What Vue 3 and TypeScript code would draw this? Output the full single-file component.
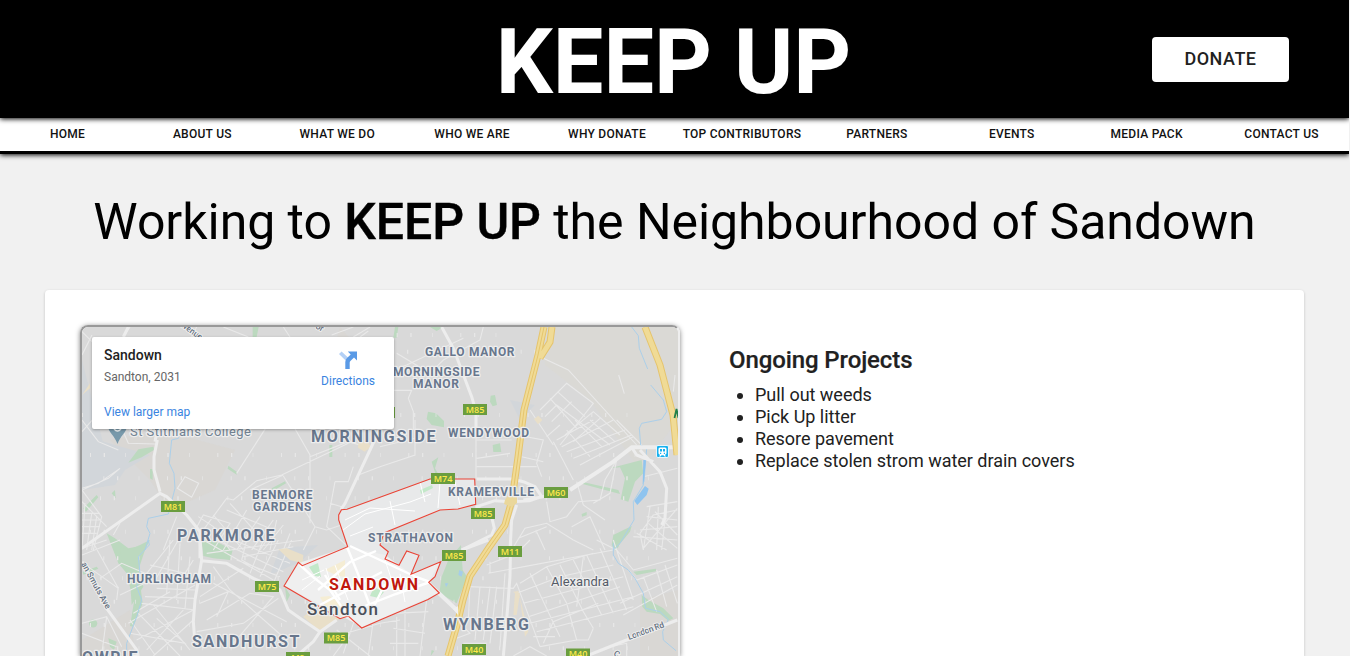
<script setup lang="ts">
interface MapLabel {
  text: string
  x: number
  y: number
  width: number
  size: number
  kind: string
  rotate?: number
}
interface Shield {
  text: string
  x: number
  y: number
}

const navItems: string[] = [
  'HOME', 'ABOUT US', 'WHAT WE DO', 'WHO WE ARE', 'WHY DONATE',
  'TOP CONTRIBUTORS', 'PARTNERS', 'EVENTS', 'MEDIA PACK', 'CONTACT US',
]

const projects: string[] = [
  'Pull out weeds',
  'Pick Up litter',
  'Resore pavement',
  'Replace stolen strom water drain covers',
]

const labels: MapLabel[] = [
  { text: 'GALLO MANOR', x: 425, y: 356.3, width: 89.5, size: 12, kind: 'area' },
  { text: 'MORNINGSIDE', x: 393, y: 376.3, width: 86.5, size: 12, kind: 'area' },
  { text: 'MANOR', x: 413, y: 388.3, width: 46, size: 12, kind: 'area' },
  { text: 'WENDYWOOD', x: 448, y: 437.3, width: 81, size: 12, kind: 'area' },
  { text: 'MORNINGSIDE', x: 311, y: 441.5, width: 124.5, size: 16, kind: 'area' },
  { text: 'St Stithians College', x: 130, y: 436, width: 121, size: 13, kind: 'place' },
  { text: 'BENMORE', x: 252, y: 499.3, width: 60.5, size: 12, kind: 'area' },
  { text: 'GARDENS', x: 253, y: 511.3, width: 58.5, size: 12, kind: 'area' },
  { text: 'PARKMORE', x: 177, y: 540.5, width: 97.5, size: 16, kind: 'area' },
  { text: 'KRAMERVILLE', x: 448, y: 496.3, width: 86, size: 12, kind: 'area' },
  { text: 'STRATHAVON', x: 368, y: 542.3, width: 85, size: 12, kind: 'area' },
  { text: 'HURLINGHAM', x: 127, y: 583.3, width: 84, size: 12, kind: 'area' },
  { text: 'SANDHURST', x: 192, y: 646.5, width: 107.5, size: 16, kind: 'area' },
  { text: 'WYNBERG', x: 443, y: 629.5, width: 86, size: 16, kind: 'area' },
  { text: 'OWRIE', x: 82, y: 662.5, width: 55.5, size: 16, kind: 'area' },
  { text: 'SANDOWN', x: 329, y: 589.5, width: 89, size: 16, kind: 'active' },
  { text: 'Sandton', x: 307, y: 615, width: 71, size: 17, kind: 'city' },
  { text: 'Alexandra', x: 551, y: 585.5, width: 58, size: 13, kind: 'town' },
  { text: 'London Rd', x: 629, y: 640, width: 38, size: 8.5, kind: 'street', rotate: -20 },
  { text: 'an Smuts Ave', x: 81, y: 564, width: 52, size: 8.5, kind: 'street', rotate: 61 },
  { text: 'avenue', x: 179, y: 325, width: 26, size: 8.5, kind: 'street', rotate: 36 },
]

const shields: Shield[] = [
  { text: 'M85', x: 463, y: 404 },
  { text: 'M81', x: 161, y: 501 },
  { text: 'M74', x: 431, y: 473 },
  { text: 'M60', x: 544, y: 487 },
  { text: 'M85', x: 471, y: 508 },
  { text: 'M11', x: 498, y: 546 },
  { text: 'M85', x: 442, y: 550 },
  { text: 'M75', x: 255, y: 581 },
  { text: 'M85', x: 324, y: 632.5 },
  { text: 'M40', x: 462, y: 644 },
  { text: 'M40', x: 566, y: 648.5 },
  { text: 'M9', x: 286, y: 652 },
  { text: 'M9', x: 371, y: 407 },
]

const boundary =
  'M380 497.3L430 479H474.7L475.7 504.3L458 509L440 510L384 533L380 545L388.3 551.7L385 559L399 565.3' +
  'L406.7 551L419 555.3L411 574.3L440.7 561.7L435 576.7L428.7 582.3L439.3 593L428 599.5L380 620' +
  'L361.7 628L348.3 616L340 618.7L284 586L298.3 562.3L302.3 565.7L347.7 546.7L338.7 520V515L341.5 509.7L347 509.2Z'
</script>

<template>
  <div class="page">
    <header class="masthead">
      <div class="brand">KEEP UP</div>
      <button class="donate" type="button">DONATE</button>
    </header>
    <nav class="nav">
      <a v-for="item in navItems" :key="item" class="nav-item">{{ item }}</a>
    </nav>
    <h1 class="headline">Working to <b>KEEP UP</b> the Neighbourhood of Sandown</h1>

    <main class="card">
      <div class="map">
        <svg class="map-art" viewBox="82 327 596 329" width="596" height="329">
          <rect x="82" y="327" width="596" height="329" fill="#d9d9d9" />
          <path fill="#dad9d5" d="M542 327H678V420L640 470L590 400L545 365Z" />
          <path fill="#d8d6d2" d="M110 440L160 430L235 450L215 490L170 510L150 480ZM82 640L130 610L135 656H82ZM340 327L360 350L345 385L320 400ZM640 600L678 590V656H640Z" opacity=".7" />
          <path fill="#d2d6da" d="M82 435L115 445L150 455L125 470L115 485L82 490ZM270 575L300 562L318 545L280 548ZM82 360L105 450L82 445ZM510 400L535 405L520 420ZM385 505L420 500L400 515Z" />

          <g transform="translate(70 315) scale(.33333)">
            <!-- parks -->
            <g class="park">
              <path d="M548 36H566L560 66H548ZM975 36H985L980 68H970Z" />
              <path transform="translate(930 0)" d="M150 36L190 36L170 48ZM332 242L345 240L351 270L338 274L330 260ZM144 290L168 295L192 318V337L155 330L140 312Z" />
              <path transform="translate(0 315)" d="M175 128L205 88L250 80L252 90L215 112ZM240 147H248V180L240 175ZM475 137L500 155V164L473 146ZM40 265L80 225L85 232L48 275ZM125 220L135 210L137 235ZM605 205L645 184L648 190L610 212ZM778 75H787V111H778ZM110 340L135 355L175 385L200 380L225 390L200 430L220 500L185 555L182 510L170 460L145 430Z" />
              <path transform="translate(930 315)" d="M338 75L360 70L364 96H340ZM155 125L175 112L165 145L185 180L195 265L185 265L175 190ZM118 212L158 194L160 203L122 222ZM605 185L715 210L720 222L608 192ZM690 145L785 120L790 160L765 185L745 245L722 238L735 175L720 142ZM605 282L620 276V286L606 290ZM700 345L755 318L750 335L705 390L695 375Z" />
              <path transform="translate(0 675)" d="M150 20L175 30L210 15L240 0L225 30L205 90L218 190L190 260L180 258L193 180L183 110L155 65ZM395 0L430 0L488 30L480 60L430 55L400 48ZM38 95L80 80L85 86L40 104ZM57 250C57 235 80 235 82 250C82 267 57 267 57 250ZM645 140L660 165L650 185ZM115 295L140 305L132 330L120 320Z" />
              <path transform="translate(930 675)" d="M205 60L243 15L248 90L262 112L230 190L178 160L185 110ZM700 15L720 0L716 20L705 32ZM760 95L828 86V94L770 105ZM785 165L805 180L850 205L880 235L865 242L840 222L800 215L787 200ZM155 330L163 333L152 348Z" />
            </g>

            <!-- fine street grids -->
            <g class="street">
              <path d="M36 120L66 60M160 66L180 36M460 36L535 66M380 36L365 66M660 66L640 36M785 60L850 36M870 66L895 48M36 350L67 315M36 50L66 80M850 66L900 36" />
              <path transform="translate(930 0)" d="M50 115L150 175L190 135L300 75L310 36M0 180L80 150L250 70M40 226H95L85 250L100 290V345M0 240L45 225M0 315L20 308M285 345H410M490 130L565 165L770 390M480 285L560 205L640 265L540 390M510 250L590 340M535 232L615 305M495 305L530 270L690 390M515 320L575 260M555 360L640 290L720 360M580 380L660 310M450 285L520 390M716 180L733 236M885 180L880 230" />
              <path transform="translate(0 315)" d="M90 0L155 25L175 70L255 72M145 90L85 65L36 0M36 210L115 175L150 145L85 190L36 205M345 170L386 190L365 232L322 205ZM660 0L720 105V310M835 70L635 165L560 182L490 240L470 235L385 350M640 168L735 320L700 390M540 210L640 165M720 110L835 65L905 85M865 165L930 140M780 250L815 260M795 185H835L850 140M795 185L770 320L833 380M735 320L770 330L830 310M36 210L95 290L70 390M36 245L110 320M36 280H90M36 300H90M36 320H90M36 340H80M45 250L36 390M65 280L50 390M80 290L65 390M385 290L430 320L480 390M430 285L520 390M480 250L570 350M470 270L610 330M370 340L400 285L480 310L430 390M460 390L530 270M500 390L570 290M545 390L610 300M580 390L640 315M610 330L570 390M620 300L600 390M660 340L640 390M320 290L280 390M150 310L130 345M500 160L590 20" />
              <path transform="translate(930 315)" d="M105 0V105L0 140M0 80L105 55M288 0V177M290 60H395M290 115L390 100M290 140H470M485 170L470 130L490 60L410 45M425 110L490 125M520 65L580 180M500 50L540 15M530 60L640 0M545 80L700 0M560 95L735 30M580 115L755 45M600 135L760 50M585 0L665 80M630 0L705 65M560 30L630 110M710 0L785 75M500 245L510 305L560 290L595 245L660 240L675 180L710 120L690 220L640 250M590 185L610 255L675 300M395 390L435 325L500 310L580 360L640 390M415 355L500 320M575 320L630 290L675 390M470 335L495 390M790 170L892 145M800 260L892 245M800 290L892 300M780 330L892 320M760 350L892 360M810 260L790 390M835 260L830 390M860 255L845 390M805 310L892 385M892 265L790 385M770 340L860 390M825 275L892 345M790 390L780 340L820 285L892 270" />
              <path transform="translate(0 675)" d="M36 25L110 0M36 45L150 0M40 70L145 145L65 0M90 115L155 70L225 100M150 165L245 120M145 140L140 180M230 100L310 0M250 130L325 0M240 75L345 100L370 60M260 145L375 150M225 170L375 175M215 190L375 210M190 220L300 155M175 250L375 135M180 280L345 310L260 235M200 300L370 210M230 330L340 210M250 348L370 240M180 240L255 345M205 220L330 348M250 195L360 330M300 0L290 160M330 10L320 180M360 50L345 205M390 170L520 85M390 190L475 155L440 230M410 240L540 160L610 170L490 310M430 80L480 150L650 300M430 130L650 245M380 275L520 250L625 175M400 0L610 120M440 0L640 95M490 0L660 70M530 0L515 60L570 90M580 0L540 100M625 0L570 110M665 0L610 130M410 40L700 0M500 60L630 110M520 50L670 20M36 250L110 230L155 320M36 280L140 320M110 230L95 345M860 220L820 340M760 300L930 250M800 270L900 348M910 240L895 348M840 280L790 348" />
              <path transform="translate(930 675)" d="M50 230V348M75 205V348M140 178L120 348M40 220L145 215M40 265L135 280M30 310L115 310M0 250L60 240M320 75L410 40L450 0M325 100L700 30M330 100V65M265 140L400 145L410 130L480 320M270 138L265 240M300 140L285 300M330 140L310 300M350 140L330 310M375 100L360 320M420 130L500 80L640 40M410 160L540 110L700 75M430 190L730 110M445 230L720 140M450 250L760 170M470 275L760 200M490 310L520 245L655 190M500 80L560 190L590 300L625 300L640 265M540 75L610 215L640 265M580 60L665 225M620 45L700 220M660 25L740 210M450 100L540 290M610 50L590 200M650 0L710 30L760 90L892 55M745 90L770 120L892 75M720 190L892 110M730 225L892 135M700 0L760 180M790 110L830 215M830 90L860 200M855 75L892 190M460 290H525M480 320L590 300M740 348V310L690 320M400 348L450 320L500 348M240 250L270 280L230 295M250 310H320" />
            </g>
            <g class="flecks">
              <path d="M36 300H1750M60 420H1800M100 490H1780M90 550H1700M60 650H1800M100 730H1780M50 790H1770M90 860H1750M60 930H1800M100 1000H1780M970 110H1450M980 60H1350" />
            </g>

            <!-- rivers and dams -->
            <g class="river">
              <path transform="translate(930 0)" d="M755 36L775 62L778 100L803 162M812 210L850 255L860 290L845 313L785 325L778 340L782 390L800 400L792 500" />
              <path transform="translate(0 315)" d="M340 0L325 55L305 60L298 130L312 160L315 205L295 282L235 295L230 320L240 340L225 390" />
              <path transform="translate(930 315)" d="M795 130L790 195L760 245L762 300L720 370L700 390" />
              <path transform="translate(0 675)" d="M235 0L238 15L205 50L210 100L200 140L215 180L200 230L170 310V330" />
              <path transform="translate(930 675)" d="M700 10V45L715 70L745 90L765 115L790 160L797 205L840 215L865 238L848 275L850 300L888 332" />
            </g>
            <path fill="#8fc4ef" transform="translate(930 315)" d="M763 243L795 198L806 206L800 225L772 255ZM790 120H798L792 180L788 195Z" />
            <path fill="#a5cdea" transform="translate(930 675)" d="M238 90L249 95L245 110L235 105ZM195 130H205L198 142Z" />
            <path fill="#e9dfc8" d="M865 383L890 378L903 395L884 410L864 398ZM1392 312L1405 302L1417 315L1404 328ZM700 905L725 885L810 910L770 940L745 945ZM1330 830L1345 828L1375 950L1365 965L1350 850ZM1335 835H1350L1340 900H1330ZM625 703L650 700L700 720L698 745L660 735ZM36 240L60 205V220Z" />

            <!-- main roads -->
            <g class="road">
              <path d="M175 36L160 66" />
              <path transform="translate(930 0)" d="M185 36L220 100L275 245L288 290V345" />
              <path transform="translate(0 315)" d="M262 60L252 110V150L270 215M36 385L270 220L290 230L350 285L390 335V415M930 25L900 90L825 250L813 268M255 65L268 0" />
              <path class="wide" transform="translate(930 315)" d="M570 210L700 125L755 82H885" />
              <path transform="translate(930 315)" d="M290 177H395L430 185L465 200L485 230L450 242L390 245L345 242L290 260L335 290L343 325L335 345L245 390M780 90L840 155L860 205L855 295L845 315M410 255L395 300L390 390M430 240L490 230L540 205M755 82L770 105L820 125" />
              <path transform="translate(0 675)" d="M390 0L395 60L385 120L375 180L370 245L375 310M395 62L470 70L550 115L630 150L655 210L690 235L750 275L730 305L680 348M750 275L800 240M36 65L110 205L200 330L205 348" />
              <path transform="translate(930 675)" d="M392 0L390 110L382 215L370 348M245 30L325 0M620 348L740 300L892 240" />
              <path class="wide" transform="translate(930 675)" d="M145 130L230 210" />
            </g>
          </g>

          <!-- highlighted suburb -->
          <path :d="boundary" fill="#e8e9ea" />
          <path fill="#efefef" d="M347 547L385 555L399 565L411 574L439 563L429 582L439 593L362 627L285 586L299 563Z" />
          <path fill="#c3e8c9" d="M420 490L432 485L433 488L421 494ZM309 567L318 563L321 577L315 576ZM374 587L384 592L379 598L370 596Z" />
          <path fill="#f5edd4" d="M320 597L329 596L347 607L345 618L325 606ZM325 570L345 560V577L338 576Z" />
          <g class="inner-roads">
            <path d="M300 565L313 577L330 590L348 616M347 547L358 574L370 606M318 590L350 562L376 551M350 546L380 560L416 577L430 582M320 605L350 589L382 572M365 606L396 594L430 582M340 600L325 575M385 584L370 614" />
            <path class="thin" d="M343 530L365 514L410 502L431 494M345 520L370 508L415 511M350 536L373 527M420 482L425 502M440 482L438 508M455 482L460 505M390 501L395 525M302 580L324 570M302 590L320 576M326 568L335 599M335 565L348 600M370 579L420 582M385 560L395 590M400 574L405 602" />
          </g>
          <path :d="boundary" class="boundary" />

          <!-- motorways -->
          <g class="motorway">
            <path d="M544 327L538 355L524 410L518 457L512 500L505 525L488 549L470 576L463 600L457 625L448 656M552 327L550 342L540 358M645 327L660 365L673 415L677 455" />
          </g>
          <g class="motorway-core">
            <path d="M544 327L538 355L524 410L518 457L512 500L505 525L488 549L470 576L463 600L457 625L448 656M552 327L550 342L540 358M645 327L660 365L673 415L677 455" />
          </g>
          <path class="motorway-line" d="M544 327L538 355L524 410L518 457L512 500L505 525L488 549L470 576L463 600L457 625L448 656" />
          <path d="M505 500L509 494H517V503L512 507L504 504Z" fill="#ead79b" />
          <path d="M453 609L458 606V615Z" fill="#f0f0f0" />

          <!-- college pin -->
          <path d="M108 426C108 418 127 418 127 426C127 432 120 436 117.5 444C115 436 108 432 108 426Z" fill="#7899ab" />
          <path d="M114 429Q117.500 433 121 429" fill="none" stroke="#eef2f4" stroke-width="1.3" />

          <!-- rail station -->
          <rect x="656.5" y="445.5" width="12" height="12" rx="1.5" fill="#17b1ef" stroke="#e6f6fd" />
          <path fill="#fff" fill-rule="evenodd" d="M660 447.500H665Q666.500 447.500 666.500 449V453.500L665 455L666 456.500H664.500L663.500 455.300H661.500L660.500 456.500H659L660 455L658.500 453.500V449Q658.500 447.500 660 447.500ZM660 449V451.500H662V449ZM663 449V451.500H665V449ZM660 452.800V454H661.200V452.800ZM663.800 452.800V454H665V452.800Z" />

          <g v-for="(shield, i) in shields" :key="`s${i}`">
            <rect :x="shield.x" :y="shield.y" width="24" height="11" fill="#6a9d3f" />
            <text class="shield-text" :x="shield.x + 12" :y="shield.y + 8.7" text-anchor="middle">{{ shield.text }}</text>
          </g>

          <text
            v-for="(label, i) in labels"
            :key="`l${i}`"
            :class="['label', label.kind]"
            :x="label.x"
            :y="label.y"
            :font-size="label.size"
            :textLength="label.width"
            :transform="label.rotate ? `rotate(${label.rotate} ${label.x} ${label.y})` : undefined"
          >{{ label.text }}</text>
          <text class="label street" x="315" y="328" font-size="8.5" transform="rotate(28 315 328)">or</text>
          <text class="label street" x="613" y="655" font-size="8.5" transform="rotate(30 613 655)">C</text>
          <path d="M674.500 418L676.500 409L678.500 418" fill="none" stroke="#23804b" stroke-width="1.8" />
        </svg>

        <section class="place-card">
          <div class="place-info">
            <div class="place-name">Sandown</div>
            <div class="place-address">Sandton, 2031</div>
            <a class="place-link">View larger map</a>
          </div>
          <a class="directions">
            <svg width="18" height="18" viewBox="0 0 18 18">
              <path d="M0 3L2.600 .4L9 6.600L6.400 9.200Z" fill="#b3d0f6" />
              <path d="M6.300 18V11Q6.300 8.800 8 7.100L11.700 3.500L8.800 .4H18V9.400L15 6.500L11.400 10Q10.700 10.700 10.700 11.700V18Z" fill="#5a9ae6" />
            </svg>
            <span>Directions</span>
          </a>
        </section>
      </div>

      <section class="projects">
        <h2>Ongoing Projects</h2>
        <ul>
          <li v-for="project in projects" :key="project">{{ project }}</li>
        </ul>
      </section>
    </main>
  </div>
</template>

<style>
body {
  margin: 0;
  background: #f1f1f1;
  overflow: hidden;
}
</style>

<style scoped>
.page {
  width: 1349px;
  height: 656px;
  overflow: hidden;
  font-family: Roboto, "Liberation Sans", sans-serif;
  color: #212121;
  background: #f1f1f1;
}
.masthead {
  position: relative;
  z-index: 2;
  display: grid;
  grid-template-columns: 1fr auto 1fr;
  align-items: center;
  height: 118px;
  background: #000;
  box-shadow: 0 1px 5px #000;
}
.brand {
  grid-column: 2;
  padding: 8px 2px 0 0;
  color: #fff;
  font-size: 90px;
  font-weight: 700;
  line-height: 102px;
  letter-spacing: -0.1px;
}
.donate {
  justify-self: end;
  width: 137px;
  height: 45px;
  margin-right: 60px;
  padding: 0 0 2px;
  border: 0;
  border-radius: 4px;
  background: #fff;
  color: #212121;
  font: 500 18px/43px Roboto, sans-serif;
  letter-spacing: 0.5px;
}
.nav {
  position: relative;
  z-index: 1;
  display: grid;
  grid-template-columns: repeat(10, 1fr);
  height: 33px;
  border-bottom: 3px solid #000;
  background: #fff;
  box-shadow: 0 1px 5px #000;
}
.nav-item {
  text-align: center;
  color: #111;
  font-size: 12px;
  font-weight: 500;
  line-height: 32px;
  letter-spacing: 0.26px;
  white-space: nowrap;
}
.headline {
  margin: 0;
  padding-top: 39px;
  height: 97px;
  color: #000;
  text-align: center;
  font-size: 50px;
  font-weight: 400;
  line-height: 58px;
  letter-spacing: -0.05px;
  white-space: nowrap;
}
.headline b {
  font-weight: 500;
  -webkit-text-stroke: 0.4px #000;
}
.card {
  display: flex;
  gap: 50px;
  box-sizing: border-box;
  width: 1259px;
  height: 366px;
  margin: 0 45px;
  padding: 35px 35px 0;
  border-radius: 4px 4px 0 0;
  background: #fff;
  box-shadow: 0 1px 3px rgba(0, 0, 0, 0.2);
}
.map {
  position: relative;
  box-sizing: border-box;
  flex: none;
  width: 600px;
  height: 331px;
  overflow: hidden;
  border: 2px solid;
  border-bottom: 0;
  border-color: #999 #eee #eee #999;
  border-radius: 8px 8px 0 0;
  box-shadow: 0 1px 5px rgba(0, 0, 0, 0.5);
}
.map-art {
  display: block;
}
.park {
  fill: #bcd9bf;
}
.street {
  fill: none;
  stroke: #e9e9e9;
  stroke-width: 3.3;
}
.flecks {
  fill: none;
  stroke: #e7e7e7;
  stroke-width: 12;
  stroke-dasharray: 3 38 4 61 2 83;
}
.river {
  fill: none;
  stroke: #abcfe9;
  stroke-width: 3;
}
.road {
  fill: none;
  stroke: #ededed;
  stroke-width: 9;
  stroke-linejoin: round;
}
.road .wide {
  stroke-width: 12;
}
.inner-roads {
  fill: none;
  stroke: #fff;
  stroke-width: 2.4;
}
.inner-roads .thin {
  stroke-width: 1;
}
.boundary {
  fill: none;
  stroke: #ea4335;
  stroke-width: 1.1;
}
.motorway {
  fill: none;
  stroke: #e5c46d;
  stroke-width: 7;
}
.motorway-core {
  fill: none;
  stroke: #f0db96;
  stroke-width: 5;
}
.motorway-line {
  fill: none;
  stroke: #e5c46d;
  stroke-width: 1;
}
.shield-text {
  fill: #ffe94a;
  font: 600 9px "Open Sans", sans-serif;
}
.label {
  fill: #68778d;
  font-weight: 500;
  stroke: #eee;
  stroke-width: 2.5px;
  stroke-linejoin: round;
  paint-order: stroke;
}
.label.area {
  font-weight: 700;
}
.label.place {
  fill: #728393;
  font-weight: 400;
}
.label.active {
  fill: #c0180f;
  stroke: #fff;
  font-weight: 700;
}
.label.city {
  fill: #4a4f59;
}
.label.town {
  fill: #545b67;
  font-weight: 400;
}
.label.street {
  fill: #647080;
  font-weight: 500;
  stroke-width: 2px;
}
.place-card {
  position: absolute;
  top: 10px;
  left: 10px;
  display: flex;
  justify-content: space-between;
  box-sizing: border-box;
  width: 302px;
  height: 92px;
  padding: 10px 19px 0 12px;
  border-radius: 2px;
  background: #fff;
  box-shadow: 0 1px 3px rgba(0, 0, 0, 0.3);
  font-size: 12px;
}
.place-name {
  color: #222;
  font-size: 14px;
  font-weight: 500;
  line-height: 16px;
}
.place-address {
  margin-top: 7px;
  color: #666;
  line-height: 14px;
}
.place-link {
  display: block;
  margin-top: 21px;
  color: #3a84df;
  line-height: 14px;
}
.directions {
  display: flex;
  flex-direction: column;
  align-items: center;
  gap: 5px;
  padding-top: 4px;
  color: #3a84df;
  line-height: 14px;
}
.directions svg {
  display: block;
}
.projects {
  padding-top: 20px;
}
.projects h2 {
  margin: 0 0 0 -1px;
  font-size: 24px;
  font-weight: 500;
  line-height: 30px;
  letter-spacing: -0.1px;
  -webkit-text-stroke: 0.2px #212121;
}
.projects ul {
  margin: 9px 0 0;
  padding-left: 25px;
  font-size: 18px;
  font-weight: 400;
  line-height: 22px;
  letter-spacing: -0.02px;
}
</style>
